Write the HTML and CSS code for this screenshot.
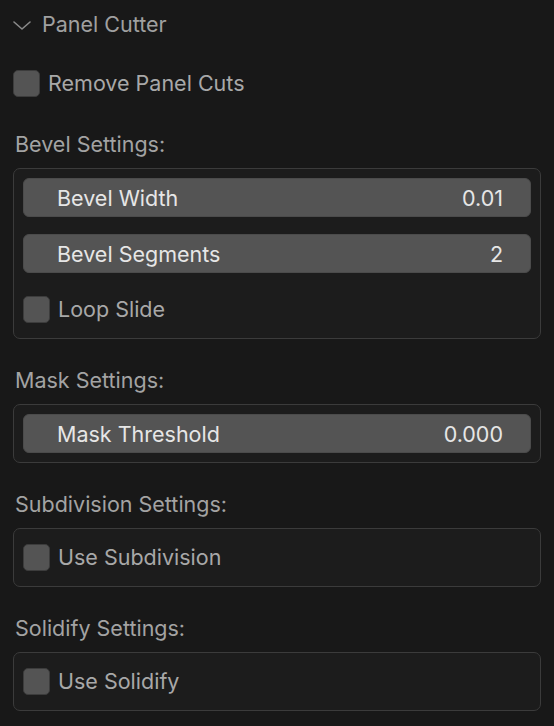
FILE: index.html
```html
<!DOCTYPE html>
<html lang="en">
<head>
<meta charset="utf-8">
<title>Panel Cutter</title>
<link rel="stylesheet" href="styles.css">
</head>
<body>
<div class="panel">
  <div class="header">
    <svg class="chevron" width="18" height="9" viewBox="0 0 18 9" aria-hidden="true"><polyline points="1,1 9,8 17,1" fill="none" stroke="#8a8a8a" stroke-width="1.6" stroke-linecap="round" stroke-linejoin="round"/></svg>
    <span class="title">Panel Cutter</span>
  </div>

  <div class="check-row top">
    <span class="checkbox"></span>
    <span class="check-label">Remove Panel Cuts</span>
  </div>

  <div class="section-label first">Bevel Settings:</div>
  <div class="box">
    <div class="field"><span>Bevel Width</span><span>0.01</span></div>
    <div class="field"><span>Bevel Segments</span><span>2</span></div>
    <div class="check-row"><span class="checkbox"></span><span class="check-label">Loop Slide</span></div>
  </div>

  <div class="section-label">Mask Settings:</div>
  <div class="box">
    <div class="field"><span>Mask Threshold</span><span>0.000</span></div>
  </div>

  <div class="section-label">Subdivision Settings:</div>
  <div class="box">
    <div class="check-row"><span class="checkbox"></span><span class="check-label">Use Subdivision</span></div>
  </div>

  <div class="section-label">Solidify Settings:</div>
  <div class="box">
    <div class="check-row"><span class="checkbox"></span><span class="check-label">Use Solidify</span></div>
  </div>
</div>
</body>
</html>
```

FILE: styles.css
```css
html, body {
  margin: 0;
  padding: 0;
  background: #181818;
}
body {
  font-family: Inter, "Noto Sans", "DejaVu Sans", sans-serif;
  font-size: 21.5px;
  color: #a4a4a4;
  width: 554px;
  height: 726px;
  overflow: hidden;
}
.panel {
  display: flex;
  flex-direction: column;
}
.header {
  height: 49px;
  display: flex;
  align-items: center;
  padding-left: 13px;
}
.chevron {
  display: block;
  margin-right: 11px;
  margin-top: 2px;
}
.title {
  color: #a0a0a0;
  line-height: 49px;
}
.check-row {
  height: 39px;
  display: flex;
  align-items: center;
}
.check-row.top {
  height: 27px;
  margin-top: 21px;
  padding-left: 13px;
}
.checkbox {
  width: 27px;
  height: 27px;
  box-sizing: border-box;
  border-radius: 5px;
  background: #545454;
  border: 1px solid #3c3c3c;
  flex: none;
}
.check-label {
  margin-left: 8px;
  color: #a8a8a8;
  line-height: 27px;
}
.section-label {
  height: 32px;
  line-height: 33px;
  margin-top: 25px;
  padding-left: 15px;
  color: #a3a3a3;
}
.section-label.first {
  margin-top: 31px;
}
.box {
  margin: 8px 0 0 13px;
  width: 528px;
  box-sizing: border-box;
  border: 1px solid #3b3b3b;
  border-radius: 7px;
  background: #1c1c1c;
  padding: 9px;
  display: flex;
  flex-direction: column;
  gap: 17px;
}
.field {
  height: 39px;
  box-sizing: border-box;
  border-radius: 6px;
  background: #545454;
  border: 1px solid #4b4b4b;
  display: flex;
  align-items: center;
  justify-content: space-between;
  padding: 0 27px 0 33px;
  color: #e6e6e6;
}
```
